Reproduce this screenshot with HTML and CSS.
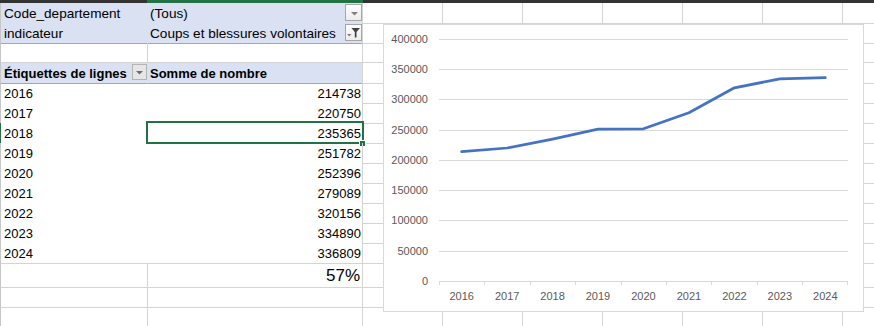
FILE: index.html
```html
<!DOCTYPE html>
<html lang="fr">
<head>
    <meta charset="UTF-8">
    <title>Tableau croisé - Coups et blessures volontaires</title>
    <link rel="stylesheet" href="styles.css">
</head>
<body>
    <div class="topbar">
        <div class="tb-dark"></div>
        <div class="tb-active"></div>
        <div class="tb-dark"></div>
    </div>

    <div class="sheet">
        <!-- filtres du tableau croisé -->
        <div class="row row-filter">
            <div class="cell a">Code_departement</div>
            <div class="cell b">(Tous)
                <span class="dd-button">
                    <svg width="15" height="15" viewBox="0 0 15 15"><polygon points="5,7 12,7 8.5,10.5" fill="#7f7f7f"/></svg>
                </span>
            </div>
            <div class="rest"></div>
        </div>
        <div class="row row-filter row-filter-end">
            <div class="cell a">indicateur</div>
            <div class="cell b">Coups et blessures volontaires
                <span class="dd-button">
                    <svg width="15" height="15" viewBox="0 0 15 15">
                        <polygon points="1,9 5.5,9 3.25,11.5" fill="#7f7f7f"/>
                        <path d="M5.5,3 H14 L10.5,7 V12.5 H8.8 V7 Z" fill="#404040"/>
                    </svg>
                </span>
            </div>
            <div class="rest"></div>
        </div>
        <div class="row">
            <div class="cell a"></div>
            <div class="cell b"></div>
            <div class="rest"></div>
        </div>

        <!-- en-tête -->
        <div class="row row-head">
            <div class="cell a">Étiquettes de lignes
                <span class="head-button">
                    <svg width="13" height="14" viewBox="0 0 13 14"><polygon points="3,6 10,6 6.5,9.5" fill="#6d6d6d"/></svg>
                </span>
            </div>
            <div class="cell b">Somme de nombre</div>
            <div class="rest"></div>
        </div>

        <!-- lignes -->
        <div class="row row-item"><div class="cell a">2016</div><div class="cell b num">214738</div><div class="rest"></div></div>
        <div class="row row-item"><div class="cell a">2017</div><div class="cell b num">220750</div><div class="rest"></div></div>
        <div class="row row-item row-active">
            <div class="cell a">2018</div>
            <div class="cell b num">235365
                <span class="selection"></span>
                <span class="fill-handle"></span>
            </div>
            <div class="rest"></div>
        </div>
        <div class="row row-item"><div class="cell a">2019</div><div class="cell b num">251782</div><div class="rest"></div></div>
        <div class="row row-item"><div class="cell a">2020</div><div class="cell b num">252396</div><div class="rest"></div></div>
        <div class="row row-item"><div class="cell a">2021</div><div class="cell b num">279089</div><div class="rest"></div></div>
        <div class="row row-item"><div class="cell a">2022</div><div class="cell b num">320156</div><div class="rest"></div></div>
        <div class="row row-item"><div class="cell a">2023</div><div class="cell b num">334890</div><div class="rest"></div></div>
        <div class="row row-item row-item-last"><div class="cell a">2024</div><div class="cell b num">336809</div><div class="rest"></div></div>

        <div class="row row-tall">
            <div class="cell a"></div>
            <div class="cell b num big">57%</div>
            <div class="rest"></div>
        </div>
        <div class="row"><div class="cell a"></div><div class="cell b"></div><div class="rest"></div></div>
        <div class="row"><div class="cell a"></div><div class="cell b"></div><div class="rest"></div></div>
    </div>

    <!-- graphique posé sur la feuille -->
    <div class="chart">
        <svg width="479" height="286" viewBox="0 0 479 286">
            <g class="grid">
                <line x1="55" x2="464" y1="14.5" y2="14.5"/>
                <line x1="55" x2="464" y1="44.5" y2="44.5"/>
                <line x1="55" x2="464" y1="74.5" y2="74.5"/>
                <line x1="55" x2="464" y1="105.5" y2="105.5"/>
                <line x1="55" x2="464" y1="135.5" y2="135.5"/>
                <line x1="55" x2="464" y1="165.5" y2="165.5"/>
                <line x1="55" x2="464" y1="195.5" y2="195.5"/>
                <line x1="55" x2="464" y1="226.5" y2="226.5"/>
                <line x1="55" x2="464" y1="256.5" y2="256.5"/>
            </g>
            <g class="grid">
                <line x1="55.5" x2="55.5" y1="256.5" y2="260"/>
                <line x1="100.5" x2="100.5" y1="256.5" y2="260"/>
                <line x1="146.5" x2="146.5" y1="256.5" y2="260"/>
                <line x1="191.5" x2="191.5" y1="256.5" y2="260"/>
                <line x1="237.5" x2="237.5" y1="256.5" y2="260"/>
                <line x1="282.5" x2="282.5" y1="256.5" y2="260"/>
                <line x1="327.5" x2="327.5" y1="256.5" y2="260"/>
                <line x1="373.5" x2="373.5" y1="256.5" y2="260"/>
                <line x1="418.5" x2="418.5" y1="256.5" y2="260"/>
                <line x1="463.5" x2="463.5" y1="256.5" y2="260"/>
            </g>
            <g class="y-labels">
                <text x="44" y="17.5">400000</text>
                <text x="44" y="47.5">350000</text>
                <text x="44" y="77.5">300000</text>
                <text x="44" y="108.5">250000</text>
                <text x="44" y="138.5">200000</text>
                <text x="44" y="168.5">150000</text>
                <text x="44" y="198.5">100000</text>
                <text x="44" y="229.5">50000</text>
                <text x="44" y="259.5">0</text>
            </g>
            <g class="x-labels">
                <text x="77.7" y="275">2016</text>
                <text x="123.2" y="275">2017</text>
                <text x="168.6" y="275">2018</text>
                <text x="214" y="275">2019</text>
                <text x="259.5" y="275">2020</text>
                <text x="304.9" y="275">2021</text>
                <text x="350.4" y="275">2022</text>
                <text x="395.8" y="275">2023</text>
                <text x="441.3" y="275">2024</text>
            </g>
            <polyline class="series" points="77.7,126.6 123.2,123 168.6,114.1 214,104.2 259.5,103.8 304.9,87.7 350.4,62.8 395.8,53.9 441.3,52.7"/>
        </svg>
    </div>
</body>
</html>
```

FILE: styles.css
```css
* {
    margin: 0;
    padding: 0;
    box-sizing: border-box;
}

body {
    position: relative;
    width: 874px;
    height: 326px;
    overflow: hidden;
    background: #fff;
    font-family: "Liberation Sans", Arial, sans-serif;
    font-size: 13px;
    color: #000;
}

/* bas des en-têtes de colonnes */
.topbar {
    display: grid;
    grid-template-columns: 147px 216px 1fr;
    height: 3px;
}

.tb-dark {
    background: #333;
}

.tb-active {
    background: #217346;
}

/* feuille */
.row {
    display: grid;
    grid-template-columns: 148px 215px 1fr;
    height: 20px;
}

.cell {
    position: relative;
    height: 100%;
    padding: 2px 2px 0 2px;
    line-height: 18px;
    white-space: nowrap;
    border-bottom: 1px solid #d4d4d4;
}

.a {
    padding-left: 3px;
    border-left: 1px solid #c6c6c6;
    border-right: 1px solid #d4d4d4;
}

.b {
    border-right: 1px solid #d4d4d4;
}

.num {
    text-align: right;
    padding-right: 1px;
}

.rest {
    height: 100%;
    border-bottom: 1px solid #d4d4d4;
    background: repeating-linear-gradient(to right, transparent 0 79px, #d4d4d4 79px 80px);
}

/* zone des filtres */
.row-filter .cell {
    background: #d9e1f2;
    border-bottom-color: transparent;
    font-size: 13.6px;
}

.row-filter .a {
    border-right-color: transparent;
}

.row-filter-end .cell {
    border-bottom-color: #8ea9db;
}

/* en-tête du tableau */
.row-head .cell {
    background: #d9e1f2;
    border-bottom-color: #8ea9db;
    font-weight: bold;
}

.row-head .a {
    border-right-color: transparent;
}

/* lignes du tableau */
.row-item .cell {
    border-bottom-color: transparent;
}

.row-item .a {
    border-right-color: transparent;
}

.row-item-last .cell {
    border-bottom-color: #d4d4d4;
}

.row-active .a {
    border-left-color: #217346;
}

.row-tall {
    height: 25px;
}

.big {
    font-size: 17px;
    line-height: 23px;
    padding-top: 1px;
    padding-right: 2px;
}

/* boutons de liste déroulante */
.dd-button {
    position: absolute;
    top: 1px;
    right: 0;
    width: 17px;
    height: 17px;
    border: 1px solid #a6a6a6;
    background: linear-gradient(#fdfdfd, #ededed);
    display: flex;
}

.head-button {
    position: absolute;
    top: 1px;
    right: 0;
    width: 15px;
    height: 16px;
    border: 1px solid #b4b4b4;
    background: #e6e6e6;
    display: flex;
}

/* cellule active */
.selection {
    position: absolute;
    left: -2px;
    top: -2px;
    width: 218px;
    height: 23px;
    border: 2px solid #217346;
}

.fill-handle {
    position: absolute;
    right: -4px;
    bottom: -4px;
    width: 7px;
    height: 7px;
    background: #217346;
    border: 1px solid #fff;
}

/* graphique */
.chart {
    position: absolute;
    left: 383px;
    top: 24px;
    width: 481px;
    height: 288px;
    border: 1px solid #d9d9d9;
    background: #fff;
}

.chart svg {
    display: block;
}

.grid line {
    stroke: #d9d9d9;
    stroke-width: 1;
    shape-rendering: crispEdges;
}

.chart text {
    font-family: "Liberation Sans", Arial, sans-serif;
    font-size: 11px;
    fill: #595959;
}

.y-labels text {
    text-anchor: end;
}

.x-labels text {
    text-anchor: middle;
}

.series {
    fill: none;
    stroke: #4472c4;
    stroke-width: 2.75;
    stroke-linejoin: round;
    stroke-linecap: round;
}
```
